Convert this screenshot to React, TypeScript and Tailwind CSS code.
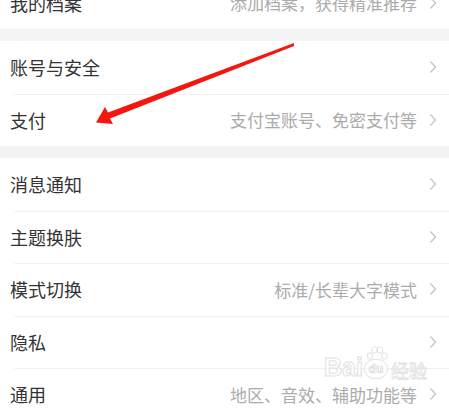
import React from "react";

type Row = { label: string; sub?: string };

const Chevron = () => (
  <svg width="8" height="14" viewBox="0 0 8 14" className="shrink-0">
    <path d="M1.5 1.5 L6.5 7 L1.5 12.5" fill="none" stroke="#c4c4c4" strokeWidth="1.3" />
  </svg>
);

const Section = ({ rows }: { rows: Row[] }) => (
  <div className="bg-white">
    {rows.map((r, i) => (
      <div key={r.label} className="relative flex h-[52.5px] items-center pl-[10px] pr-[12px]">
        {i > 0 && <div className="absolute left-[14px] right-0 top-0 h-px bg-[#f1f1f1]" />}
        <span className="flex-1 text-[18px] leading-none text-[#333333]">{r.label}</span>
        {r.sub && <span className="mr-[12px] text-[17px] leading-none text-[#ababab]">{r.sub}</span>}
        <Chevron />
      </div>
    ))}
  </div>
);

export default function App() {
  return (
    <div
      className="relative h-[410px] w-[449px] overflow-hidden bg-[#f4f4f4]"
      style={{ fontFamily: '"Noto Sans CJK SC", "Noto Sans", sans-serif' }}
    >
      <div className="-mt-[24px] flex flex-col gap-[12px]">
        <div className="bg-white">
          <div className="flex h-[53px] items-center pl-[10px] pr-[12px]">
            <span className="flex-1 text-[18px] leading-none text-[#333333]">我的档案</span>
            <span className="mr-[12px] text-[17px] leading-none text-[#ababab]">添加档案，获得精准推荐</span>
            <Chevron />
          </div>
        </div>
        <Section rows={[{ label: "账号与安全" }, { label: "支付", sub: "支付宝账号、免密支付等" }]} />
        <Section
          rows={[
            { label: "消息通知" },
            { label: "主题换肤" },
            { label: "模式切换", sub: "标准/长辈大字模式" },
            { label: "隐私" },
            { label: "通用", sub: "地区、音效、辅助功能等" },
          ]}
        />
      </div>

      {/* red annotation arrow */}
      <svg className="pointer-events-none absolute left-0 top-0" width="449" height="410">
        <polygon
          points="294,43 108,112.5 105,107 96,122.5 113,124 110,118.5 294,46"
          fill="#f5160f"
        />
      </svg>

      {/* Baidu watermark */}
      <div className="pointer-events-none absolute left-[324px] top-[355px] flex items-end opacity-90">
        <span
          className="text-[25px] font-bold leading-none text-white/60"
          style={{ fontFamily: '"Liberation Sans", sans-serif', WebkitTextStroke: "1px #dedede" }}
        >
          Bai
        </span>
        <div className="relative mx-[1px] mb-[1px] flex h-[20px] w-[24px] items-center justify-center rounded-full border border-[#dedede] bg-white/60">
          <span className="text-[12px] font-bold leading-none text-white" style={{ fontFamily: '"Liberation Sans", sans-serif', WebkitTextStroke: "0.7px #d4d4d4" }}>
            du
          </span>
          <svg className="absolute -top-[14px] left-[0px]" width="24" height="15" viewBox="0 0 24 15">
            <ellipse cx="5" cy="10" rx="2.8" ry="3.2" fill="white" fillOpacity="0.6" stroke="#dedede" />
            <ellipse cx="9.5" cy="4" rx="2.8" ry="3.2" fill="white" fillOpacity="0.6" stroke="#dedede" />
            <ellipse cx="15" cy="4" rx="2.8" ry="3.2" fill="white" fillOpacity="0.6" stroke="#dedede" />
            <ellipse cx="19.5" cy="10" rx="2.8" ry="3.2" fill="white" fillOpacity="0.6" stroke="#dedede" />
          </svg>
        </div>
        <span className="ml-[2px] mb-[1px] text-[18px] leading-none text-white/60" style={{ WebkitTextStroke: "0.8px #e0e0e0" }}>
          经验
        </span>
      </div>
    </div>
  );
}
